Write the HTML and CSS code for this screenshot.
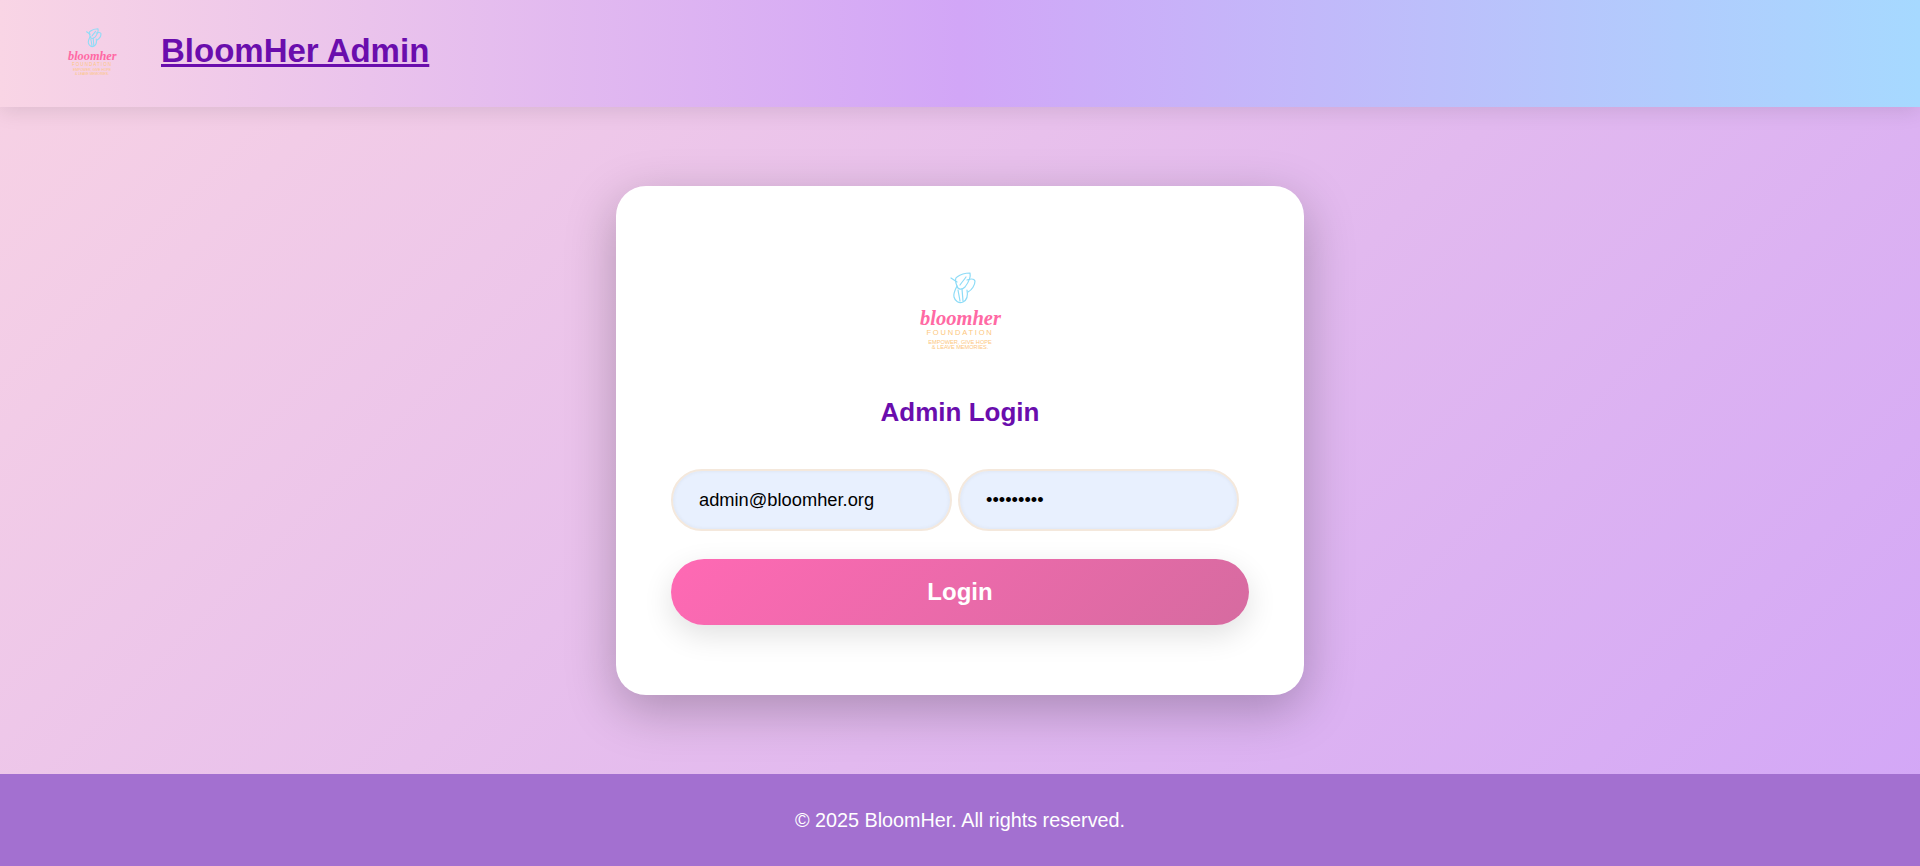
FILE: index.html
```html
<!DOCTYPE html>
<html lang="en">

<head>
    <meta charset="UTF-8">
    <meta name="viewport" content="width=device-width, initial-scale=1.0">
    <title>BloomHer Admin</title>
    <link rel="stylesheet" href="styles.css">
</head>

<body>
    <header class="topbar">
        <svg class="topbar-logo" viewBox="0 10 100 100">
            <g class="logo-wing">
                <path d="M41 28 L47 32" />
                <path d="M47 36 C45 31 45 28 47 27 C51 24 56 23 60 23 C61 27 58 33 55 37 C52 40 48 40 47 36 Z" />
                <path d="M57 30 C60 29 64 28 65 31 C65 35 62 40 58 42" />
                <path d="M47 36 C45 40 43 44 44 47 C45 51 49 54 53 52 C57 50 58 45 57 40" />
                <path d="M48 40 L50 51 M52 39 L53 51 M50 35 C52 32 54 30 56 27" />
            </g>
            <text class="logo-name" x="50.5" y="75">bloomher</text>
            <text class="logo-found" x="50" y="85.3">FOUNDATION</text>
            <text class="logo-tag" x="50" y="94">EMPOWER, GIVE HOPE</text>
            <text class="logo-tag" x="50" y="99.3">&amp; LEAVE MEMORIES.</text>
        </svg>
        <a class="brand" href="#">BloomHer Admin</a>
    </header>

    <main class="page">
        <form class="card">
            <svg class="card-logo" viewBox="0 10 100 100">
                <g class="logo-wing">
                    <path d="M41 28 L47 32" />
                    <path d="M47 36 C45 31 45 28 47 27 C51 24 56 23 60 23 C61 27 58 33 55 37 C52 40 48 40 47 36 Z" />
                    <path d="M57 30 C60 29 64 28 65 31 C65 35 62 40 58 42" />
                    <path d="M47 36 C45 40 43 44 44 47 C45 51 49 54 53 52 C57 50 58 45 57 40" />
                    <path d="M48 40 L50 51 M52 39 L53 51 M50 35 C52 32 54 30 56 27" />
                </g>
                <text class="logo-name" x="50.5" y="75">bloomher</text>
                <text class="logo-found" x="50" y="85.3">FOUNDATION</text>
                <text class="logo-tag" x="50" y="94">EMPOWER, GIVE HOPE</text>
                <text class="logo-tag" x="50" y="99.3">&amp; LEAVE MEMORIES.</text>
            </svg>
            <h2 class="card-title">Admin Login</h2>
            <div class="fields">
                <input class="field" type="email" value="admin@bloomher.org">
                <input class="field" type="password" value="123456789">
            </div>
            <button class="btn" type="button">Login</button>
        </form>
    </main>

    <footer class="footer">© 2025 BloomHer. All rights reserved.</footer>
</body>

</html>
```

FILE: styles.css
```css
* {
    margin: 0;
    padding: 0;
    box-sizing: border-box;
}

body {
    height: 100vh;
    display: flex;
    flex-direction: column;
    font-family: "Liberation Sans", Arial, sans-serif;
    background: linear-gradient(135deg, #f8d3e4, #d2a6f7);
}

.topbar {
    height: 107px;
    flex-shrink: 0;
    display: flex;
    align-items: center;
    gap: 39px;
    padding: 0 0 5px 62px;
    background: linear-gradient(90deg, #f9d5e5, #d2a6f7 50%, #a6d9ff);
    box-shadow: 0 4px 20px rgba(0, 0, 0, 0.1);
}

.topbar-logo {
    width: 60px;
    height: 60px;
    overflow: visible;
}

.topbar-logo .logo-wing {
    stroke-width: 1.8;
}

.brand {
    font-size: 33px;
    font-weight: 700;
    color: #6a0dad;
}

.logo-wing {
    fill: none;
    stroke: #8edcf7;
    stroke-width: 1.2;
    stroke-linejoin: round;
    stroke-linecap: round;
}

.logo-name {
    font-family: "Liberation Serif", serif;
    font-style: italic;
    font-weight: 700;
    font-size: 20.5px;
    text-anchor: middle;
    fill: #ff69a4;
}

.logo-found {
    font-family: "Liberation Sans", sans-serif;
    font-size: 7.5px;
    letter-spacing: 1.8px;
    text-anchor: middle;
    fill: #fdc77e;
}

.logo-tag {
    font-family: "Liberation Sans", sans-serif;
    font-size: 5.6px;
    text-anchor: middle;
    fill: #fdc77e;
}

.page {
    flex: 1;
    display: flex;
    align-items: center;
    justify-content: center;
}

.card {
    width: 688px;
    height: 509px;
    padding: 74px 55px 0;
    background: #fff;
    border-radius: 30px;
    box-shadow: 0 15px 50px rgba(0, 0, 0, 0.25);
    display: flex;
    flex-direction: column;
}

.card-logo {
    width: 100px;
    height: 100px;
    flex-shrink: 0;
    align-self: center;
    overflow: visible;
}

.card-title {
    margin-top: 37px;
    text-align: center;
    font-size: 26px;
    color: #6a0dad;
}

.fields {
    display: flex;
    gap: 6px;
    margin-top: 41px;
}

.field {
    width: 281px;
    height: 62px;
    padding: 0 26px;
    border: 2px solid #f4e8dc;
    border-radius: 31px;
    background: #e8f0fe;
    box-shadow: inset 0 0 4px rgba(0, 0, 0, 0.06);
    font-family: inherit;
    font-size: 18.3px;
    color: #000;
}

.btn {
    height: 66px;
    margin-top: 28px;
    border: none;
    border-radius: 33px;
    background: linear-gradient(135deg, #ff69b4, #d66ba0);
    color: #fff;
    font-family: inherit;
    font-size: 24px;
    font-weight: 700;
    box-shadow: 0 10px 30px rgba(0, 0, 0, 0.12);
}

.footer {
    height: 92px;
    flex-shrink: 0;
    display: flex;
    align-items: center;
    justify-content: center;
    background: #a370d0;
    color: #fff;
    font-size: 19.8px;
}
```
